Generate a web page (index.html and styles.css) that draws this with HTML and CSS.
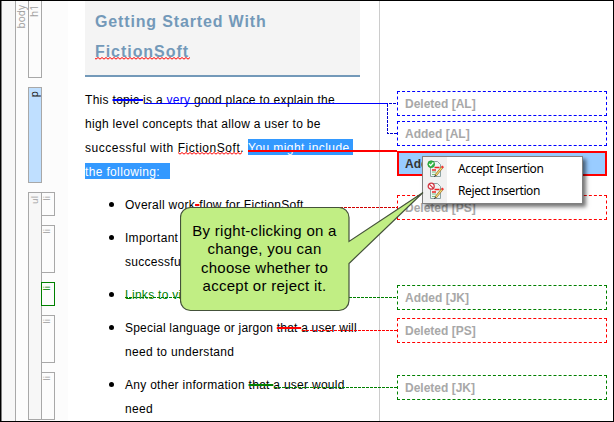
FILE: index.html
```
<!DOCTYPE html>
<html lang="en">
<head>
<meta charset="utf-8">
<title>Getting Started With FictionSoft</title>
<link rel="stylesheet" href="styles.css">
</head>
<body>
<div class="editor">
  <aside class="structure">
    <div class="gutter"></div>
    <div class="bar-body"><span class="tag">body</span></div>
    <div class="blocks">
      <div class="bar bar-h1"><span class="tag">h1</span></div>
      <div class="bar bar-p"><span class="tag">p</span></div>
      <div class="list-bars">
        <div class="bar-ul"><span class="tag">ul</span></div>
        <div class="items">
          <div class="bar-li"><span class="tag">li</span></div>
          <div class="bar-li tall"><span class="tag">li</span></div>
          <div class="bar-li current"><span class="tag">li</span></div>
          <div class="bar-li tall"><span class="tag">li</span></div>
          <div class="bar-li tall"><span class="tag">li</span></div>
        </div>
      </div>
    </div>
  </aside>
  <main class="page">
    <h1><span class="l-title">Getting Started With</span><br><span class="l-title2">FictionSoft</span></h1>
    <p><span class="l1">This <span class="cut blue">topic </span>is a <span class="new">very</span> good place to explain the</span><br><span class="l2">high level concepts that allow a user to be</span><br><span class="l3">successful with FictionSoft. <span class="sel">You might include </span></span><br><span class="l4"><span class="sel end">the following:</span></span></p>
    <ul>
      <li><span class="l5">Overall work<span class="cut red">-</span>flow for FictionSoft</span></li>
      <li><span class="l6">Important features for</span><br><span class="l7">successful use</span></li>
      <li><span class="l8 added">Links to videos</span></li>
      <li><span class="l9">Special language or jargon <span class="cut red">that </span>a user will</span><br><span class="l10">need to understand</span></li>
      <li><span class="l11">Any other information <span class="cut green">that </span>a user would</span><br><span class="l12">need</span></li>
    </ul>
  </main>
  <section class="changes">
    <div class="change blue">Deleted [AL]</div>
    <div class="change blue">Added [AL]</div>
    <div class="change active">Added [PS]</div>
    <div class="change red gap-a">Deleted [PS]</div>
    <div class="change green gap-b">Added [JK]</div>
    <div class="change red gap-c">Deleted [PS]</div>
    <div class="change green gap-d">Deleted [JK]</div>
  </section>
</div>
<svg class="overlay" width="614" height="422" viewBox="0 0 614 422" fill="none">
  <defs><pattern id="wave" width="4" height="3" patternUnits="userSpaceOnUse"><path d="M-1 3L2 0.500L5 3" fill="none" stroke="#f00"/></pattern></defs>
  <g shape-rendering="crispEdges">
    <path d="M145 103.5H388" stroke="#00f"/>
    <path d="M389 103.5H397M387.5 104V133.5H397" stroke="#00c" stroke-dasharray="3 1"/>
    <path d="M248 151H397" stroke="#f00" stroke-width="2"/>
    <path d="M196 207.5H397" stroke="#d00000" stroke-dasharray="3 1"/>
    <path d="M125 297.5H397M274 387.5H397" stroke="#008000" stroke-dasharray="3 1"/>
    <path d="M302 330.5H397" stroke="#f00" stroke-dasharray="3 1"/>
  </g>
  <rect x="95" y="57" width="95" height="3" fill="url(#wave)"/>
  <g transform="translate(0 -1)"><rect x="178" y="153" width="64" height="3" fill="url(#wave)"/></g>
</svg>
<div class="menu">
  <div class="entry">
    <svg class="ico" width="18" height="18" viewBox="0 0 18 18" fill="none"><path d="M3.500 1.500h7l3 3v12h-10z" fill="#edf4f4" stroke="#8ca3a3"/><path d="M5 12h4M5 14.500h3" stroke="#7cc07c"/><path d="M7.500 7.500h5M5 10h4" stroke="#e22" stroke-width="1.500"/><path d="M8.500 15.500l6.500-8" stroke="#9b7935" stroke-width="2.400"/><path d="M9 15l6-7.500" stroke="#ffe278" stroke-width="1.200"/><path d="M14.800 7.800l1.300-1.600" stroke="#e33" stroke-width="2.400"/><path d="M7.500 17l1-2" stroke="#333"/><circle cx="4.200" cy="4.200" r="3.400" fill="#35b848" stroke="#168b2b" stroke-width=".7"/><path d="M2.200 4l1.500 1.700L6.400 2.500" stroke="#fff" stroke-width="1.200"/></svg>
    <span>Accept Insertion</span>
  </div>
  <div class="entry">
    <svg class="ico" width="18" height="18" viewBox="0 0 18 18" fill="none"><path d="M3.500 1.500h7l3 3v12h-10z" fill="#edf4f4" stroke="#8ca3a3"/><path d="M5 12h4M5 14.500h3" stroke="#7cc07c"/><path d="M7.500 7.500h5M5 10h4" stroke="#e22" stroke-width="1.500"/><path d="M8.500 15.500l6.500-8" stroke="#9b7935" stroke-width="2.400"/><path d="M9 15l6-7.500" stroke="#ffe278" stroke-width="1.200"/><path d="M14.800 7.800l1.300-1.600" stroke="#e33" stroke-width="2.400"/><path d="M7.500 17l1-2" stroke="#333"/><circle cx="4.200" cy="4.200" r="3" fill="#fff" stroke="#d33643" stroke-width="1.300"/><path d="M2.200 2.200l4 4" stroke="#d33643" stroke-width="1.200"/></svg>
    <span>Reject Insertion</span>
  </div>
</div>
<div class="callout">
  <svg class="bubble" width="246" height="122" viewBox="0 0 246 122"><path d="M10.5 15.5H159a10 10 0 0 1 10 10V49.500L243 .5 169 71.500V108.500a10 10 0 0 1-10 10H10.500a10 10 0 0 1-10-10V25.500a10 10 0 0 1 10-10z" fill="#c1ee84" stroke="#44523a" stroke-width="1.2"/></svg>
  <div class="callout-text"><span class="c1">By right-clicking on a</span><br><span class="c2">change, you can</span><br><span class="c3">choose whether to</span><br><span class="c4">accept or reject it.</span></div>
</div>
</body>
</html>
```
FILE: styles.css
```
* { box-sizing: border-box; }
body {
  margin: 0;
  width: 614px;
  height: 422px;
  overflow: hidden;
  position: relative;
  background: #fff;
  color: #000;
  font: 12px/24px "Liberation Sans", Arial, sans-serif;
}
.editor {
  display: flex;
  height: 422px;
  border: 1px solid #000;
  overflow: hidden;
}
.structure {
  display: flex;
  flex: none;
  width: 67px;
  background: #fcfcfc;
  border-left: 1px solid #808080;
}
.gutter { width: 13px; background: #f7f7f7; }
.bar-body { width: 13px; border-left: 1px solid #a8a8a8; padding-top: 4px; }
.blocks { width: 27px; height: 421px; }
.tag {
  display: block;
  writing-mode: vertical-rl;
  transform: rotate(180deg);
  font: 10px/11px "Noto Sans", sans-serif;
  color: #a0a0a0;
}
.bar { width: 14px; border: 1px solid #a8a8a8; padding-top: 4px; }
.bar-h1 { height: 77px; border-top: 0; }
.bar-p { height: 96px; margin-top: 9px; background: #bfdfff; padding-top: 3px; }
.bar-p .tag { color: #222; }
.list-bars { display: flex; margin-top: 9px; height: 228px; }
.bar-ul { width: 14px; border: 1px solid #a8a8a8; background: #f7f7f7; padding-top: 3px; }
.bar-ul .tag { font-size: 9px; }
.items { display: flex; flex-direction: column; gap: 9px; margin-left: -1px; }
.bar-li { width: 14px; height: 24px; border: 1px solid #a8a8a8; padding-top: 3px; }
.bar-li .tag { font-size: 9px; line-height: 10px; }
.items .tall { height: 48px; }
.current { border-color: #008000; }
.current .tag { color: #008000; }
.page { width: 275px; margin-left: 17px; flex: none; }
h1 {
  margin: 0;
  height: 76px;
  padding: 6px 0 0 10px;
  background: #f4f4f4;
  border-bottom: 2px solid #7399b9;
  color: #7399b9;
  font-size: 16px;
  line-height: 30px;
  white-space: nowrap;
}
p { margin: 11px 0 9px; white-space: nowrap; }
ul { margin: 0; padding-left: 40px; }
li { margin-bottom: 9px; white-space: nowrap; list-style: none; position: relative; }
li::before {
  content: "";
  position: absolute;
  left: -16px;
  top: 9px;
  width: 5px;
  height: 5px;
  border-radius: 50%;
  background: #000;
}
.cut { white-space: pre; text-decoration: line-through; text-decoration-thickness: 2px; }
.cut.blue { text-decoration-color: #00f; }
.cut.red { text-decoration-color: #f00; }
.cut.green { text-decoration-color: #008000; }
.new { color: #00f; }
.added { color: #008000; }
.sel { display: inline-block; height: 16px; line-height: 18px; background: #39f; color: #fff; white-space: pre; letter-spacing: .43px; }
.end { padding-right: 10px; letter-spacing: .35px; }
.l-title { letter-spacing: .85px; }
.l-title2 { letter-spacing: .95px; }
.l1, .l2 { letter-spacing: .3px; }
.l3 { letter-spacing: .54px; }
.l5, .l6, .l7, .l8, .l11 { letter-spacing: .28px; }
.l9 { letter-spacing: .21px; }
.l10, .l12 { letter-spacing: .33px; }
.changes {
  flex: none;
  width: 233px;
  margin-left: 19px;
  border-left: 1px solid #ccc;
  padding: 90px 5px 0 17px;
}
.change {
  width: 210px;
  height: 25px;
  margin-bottom: 5px;
  padding-left: 7px;
  border: 1px dashed;
  color: #a8a8a8;
  font-weight: bold;
  line-height: 24px;
}
.change.blue { border-color: #00f; }
.change.red { border-color: #f00; }
.change.green { border-color: #008000; }
.change.active { border: 2px solid #f00; background: #9cf; color: #333; line-height: 22px; padding-left: 6px; }
.gap-a { margin-top: 19px; }
.gap-b { margin-top: 65px; margin-bottom: 0; }
.gap-c { margin-top: 8px; }
.gap-d { margin-top: 32px; }
.overlay { position: absolute; left: 0; top: 0; }
.menu {
  position: absolute;
  left: 422px;
  top: 156px;
  width: 161px;
  height: 48px;
  padding: 1px;
  border: 1px solid #808080;
  background: linear-gradient(90deg, #f1f1f1 24px, #fff 24px);
  box-shadow: 3px 3px 4px rgba(0, 0, 0, .55);
  font: 12px/22px "Noto Sans", sans-serif;
}
.entry { display: flex; align-items: center; height: 22px; gap: 13px; padding-left: 3px; letter-spacing: -.4px; white-space: nowrap; }
.callout { position: absolute; left: 180px; top: 192px; width: 246px; height: 122px; }
.bubble { display: block; position: absolute; left: 0; top: 0; }
.callout-text {
  position: relative;
  width: 169px;
  padding-top: 30px;
  text-align: center;
  font-size: 15px;
  line-height: 18.4px;
  letter-spacing: .27px;
  white-space: nowrap;
}
```
